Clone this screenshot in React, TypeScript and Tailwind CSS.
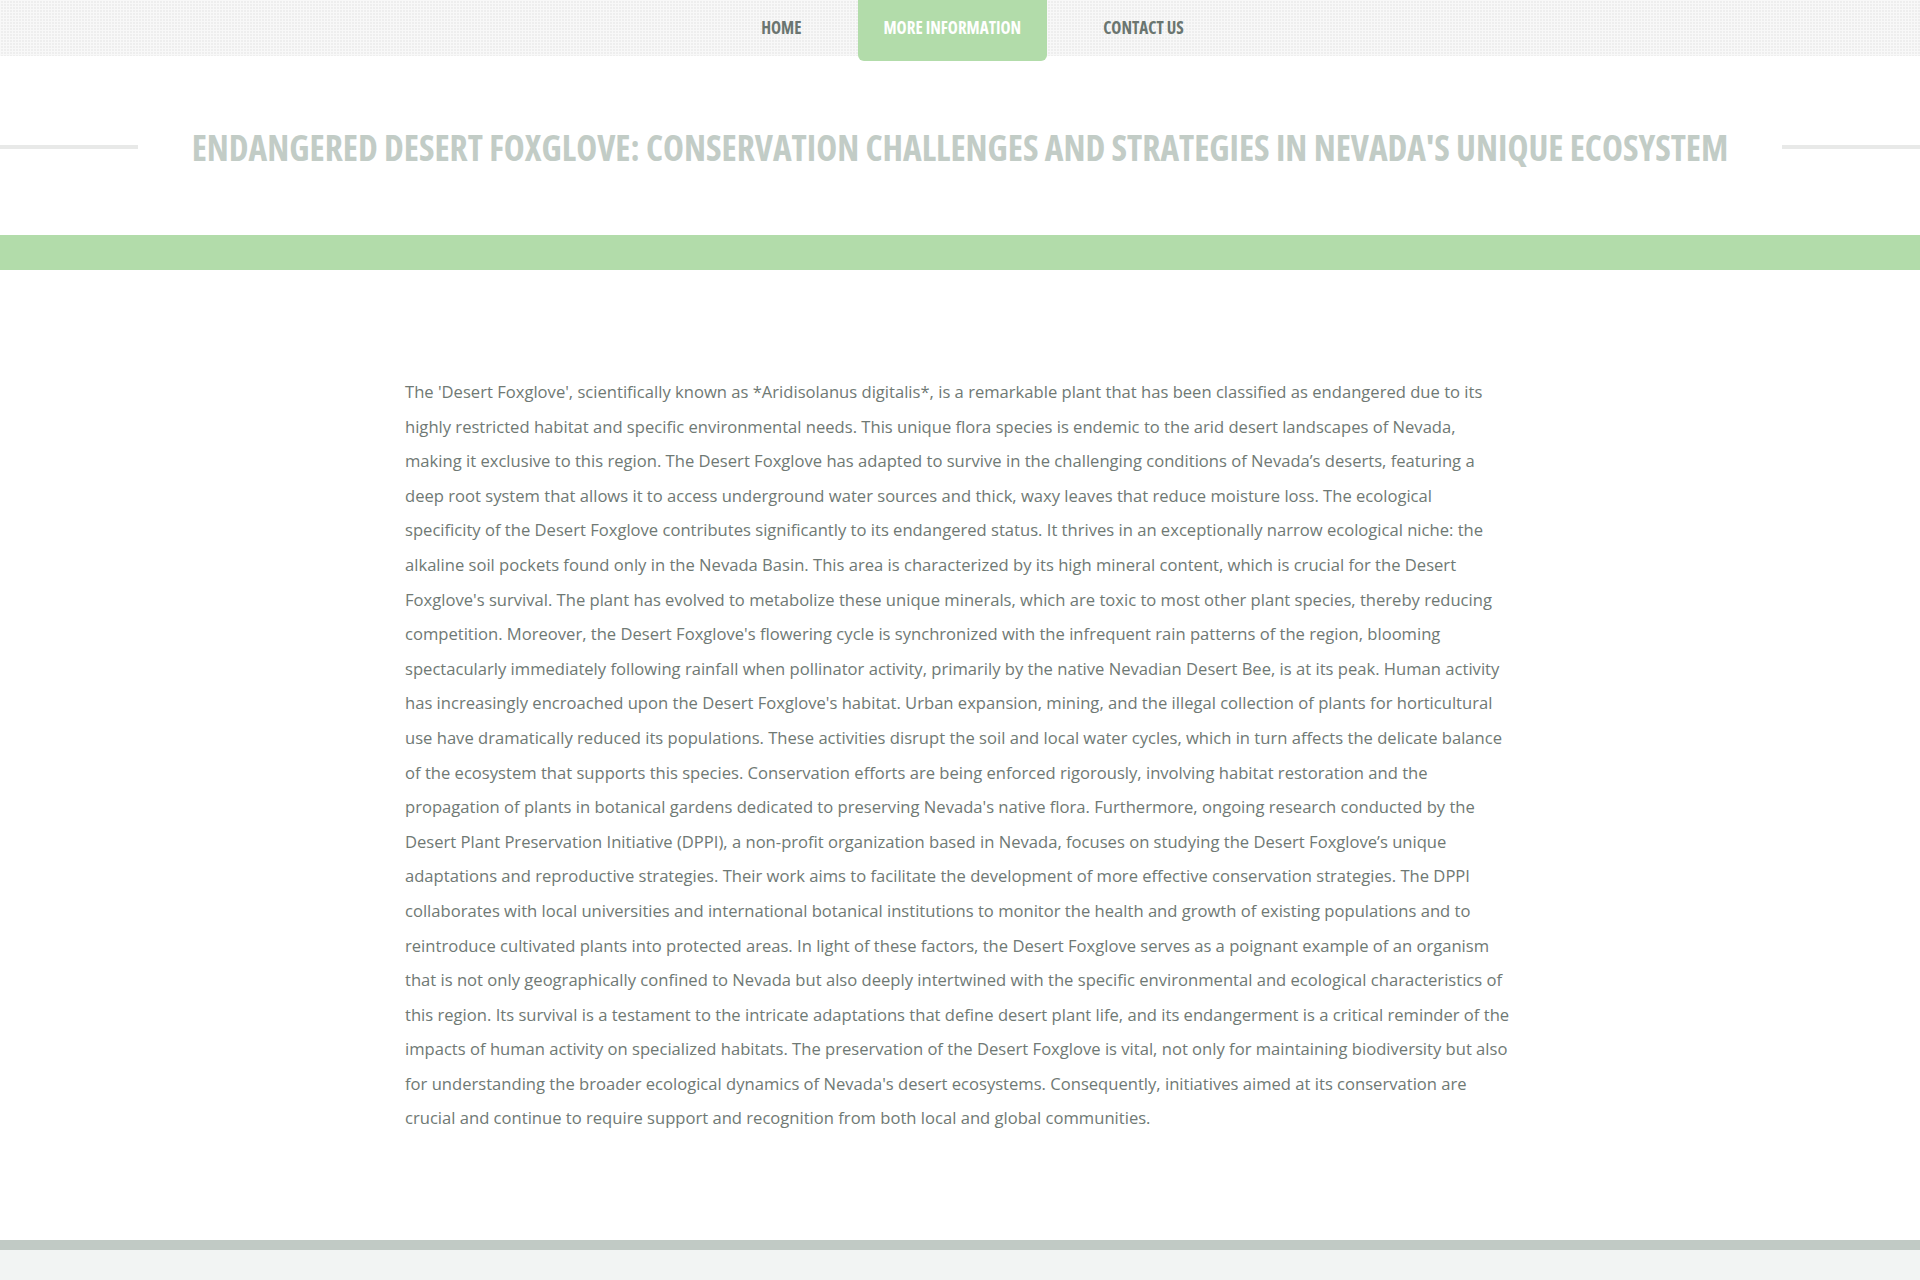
const NAV_ITEMS = [
  { href: '#', label: 'HOME', active: false },
  { href: '#', label: 'MORE INFORMATION', active: true },
  { href: '#', label: 'CONTACT US', active: false },
];

const BODY_TEXT =
  "The 'Desert Foxglove', scientifically known as *Aridisolanus digitalis*, is a remarkable plant that has been classified as endangered due to its highly restricted habitat and specific environmental needs. This unique flora species is endemic to the arid desert landscapes of Nevada, making it exclusive to this region. The Desert Foxglove has adapted to survive in the challenging conditions of Nevada\u2019s deserts, featuring a deep root system that allows it to access underground water sources and thick, waxy leaves that reduce moisture loss. The ecological specificity of the Desert Foxglove contributes significantly to its endangered status. It thrives in an exceptionally narrow ecological niche: the alkaline soil pockets found only in the Nevada Basin. This area is characterized by its high mineral content, which is crucial for the Desert Foxglove's survival. The plant has evolved to metabolize these unique minerals, which are toxic to most other plant species, thereby reducing competition. Moreover, the Desert Foxglove's flowering cycle is synchronized with the infrequent rain patterns of the region, blooming spectacularly immediately following rainfall when pollinator activity, primarily by the native Nevadian Desert Bee, is at its peak. Human activity has increasingly encroached upon the Desert Foxglove's habitat. Urban expansion, mining, and the illegal collection of plants for horticultural use have dramatically reduced its populations. These activities disrupt the soil and local water cycles, which in turn affects the delicate balance of the ecosystem that supports this species. Conservation efforts are being enforced rigorously, involving habitat restoration and the propagation of plants in botanical gardens dedicated to preserving Nevada's native flora. Furthermore, ongoing research conducted by the Desert Plant Preservation Initiative (DPPI), a non-profit organization based in Nevada, focuses on studying the Desert Foxglove\u2019s unique adaptations and reproductive strategies. Their work aims to facilitate the development of more effective conservation strategies. The DPPI collaborates with local universities and international botanical institutions to monitor the health and growth of existing populations and to reintroduce cultivated plants into protected areas. In light of these factors, the Desert Foxglove serves as a poignant example of an organism that is not only geographically confined to Nevada but also deeply intertwined with the specific environmental and ecological characteristics of this region. Its survival is a testament to the intricate adaptations that define desert plant life, and its endangerment is a critical reminder of the impacts of human activity on specialized habitats. The preservation of the Desert Foxglove is vital, not only for maintaining biodiversity but also for understanding the broader ecological dynamics of Nevada's desert ecosystems. Consequently, initiatives aimed at its conservation are crucial and continue to require support and recognition from both local and global communities.";

export default function App() {
  return (
    <div className="min-h-[1280px] bg-white font-['Open_Sans',sans-serif]">
      {/* top nav with dotted texture */}
      <header className="relative z-10 h-14 bg-[#eeeeee] bg-[image:linear-gradient(90deg,#f8f8f8_1px,transparent_1px),linear-gradient(#f8f8f8_1px,transparent_1px)] bg-[size:3px_3px]">
        <ul className="flex items-start justify-center gap-[30px] pl-[25px] text-[17px] font-bold font-stretch-condensed">
          {NAV_ITEMS.map(({ label, active, href }) => (
            <li key={label}>
              <a
                href={href}
                className={
                  active
                    ? 'flex h-[61px] items-center rounded-b-md bg-[#b2dcaa] px-[26px] pb-[5px] text-white'
                    : 'flex h-14 items-center px-[26px] text-[#6a7570]'
                }
              >
                {label}
              </a>
            </li>
          ))}
        </ul>
      </header>

      {/* page title */}
      <div className="flex items-center gap-[54px] pt-[70px] pb-[67px]">
        <div className="h-1 flex-1 bg-[#e8e9e8]" />
        <h1 className="shrink-0 text-center text-[35.4px] leading-[42px] font-bold font-stretch-condensed text-[#c2ccc6] whitespace-nowrap">
          ENDANGERED DESERT FOXGLOVE: CONSERVATION CHALLENGES AND STRATEGIES IN NEVADA'S UNIQUE ECOSYSTEM
        </h1>
        <div className="h-1 flex-1 bg-[#e8e9e8]" />
      </div>

      <div className="h-[35px] bg-[#b2dcaa]" />

      <main className="mx-auto w-[1140px] px-[15px] pt-[105px] pb-[104px]">
        <p className="pr-[4px] text-[16.6px] leading-[34.6px] text-[#6f7974]">{BODY_TEXT}</p>
      </main>

      <footer className="h-[60px] border-t-[10px] border-[#c1cac5] bg-[#f2f4f3]" />
    </div>
  );
}
